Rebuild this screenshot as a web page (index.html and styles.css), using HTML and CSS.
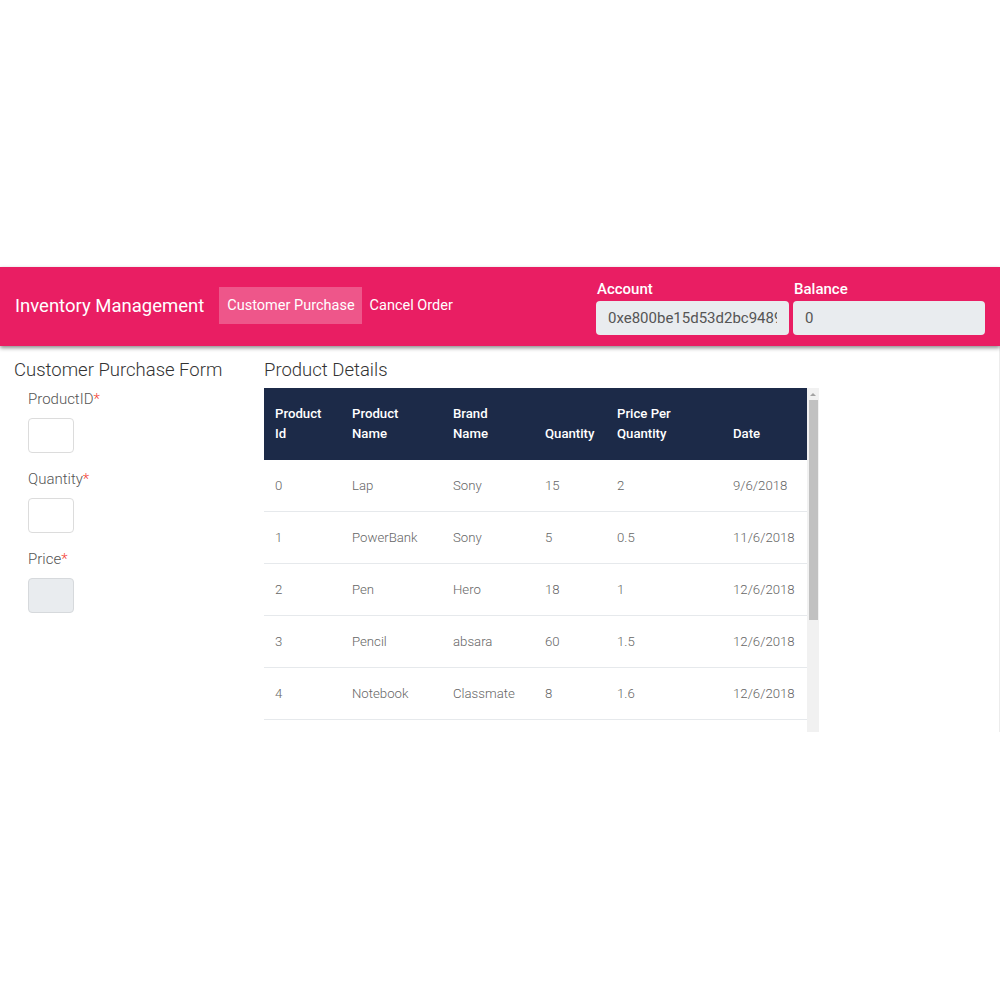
FILE: index.html
```html
<!DOCTYPE html>
<html lang="en">
<head>
<meta charset="utf-8">
<title>Inventory Management</title>
<link rel="stylesheet" href="styles.css">
</head>
<body>
<div class="page">
  <header class="nav">
    <div class="brand">Inventory Management</div>
    <nav class="links">
      <a class="link active">Customer Purchase</a>
      <a class="link">Cancel Order</a>
    </nav>
    <div class="fields">
      <div class="field account">
        <label class="field-label">Account</label>
        <input class="field-input" type="text" value="0xe800be15d53d2bc9489c1a2b3" readonly>
      </div>
      <div class="field balance">
        <label class="field-label">Balance</label>
        <input class="field-input" type="text" value="0" readonly>
      </div>
    </div>
  </header>
  <main class="content">
    <section class="form-col">
      <h2 class="title">Customer Purchase Form</h2>
      <div class="form-body">
        <div class="group">
          <label class="label">ProductID<span class="req">*</span></label>
          <input class="box" type="text">
        </div>
        <div class="group">
          <label class="label">Quantity<span class="req">*</span></label>
          <input class="box" type="text">
        </div>
        <div class="group">
          <label class="label">Price<span class="req">*</span></label>
          <input class="box disabled" type="text" disabled>
        </div>
      </div>
    </section>
    <section class="details-col">
      <h2 class="title">Product Details</h2>
      <div class="scroller">
        <div class="table-wrap">
          <table class="table">
            <colgroup>
              <col class="c1"><col class="c2"><col class="c3"><col class="c4"><col class="c5"><col class="c6">
            </colgroup>
            <thead>
              <tr><th>Product<br>Id</th><th>Product<br>Name</th><th>Brand<br>Name</th><th>Quantity</th><th>Price Per<br>Quantity</th><th>Date</th></tr>
            </thead>
            <tbody>
              <tr><td>0</td><td>Lap</td><td>Sony</td><td>15</td><td>2</td><td>9/6/2018</td></tr>
              <tr><td>1</td><td>PowerBank</td><td>Sony</td><td>5</td><td>0.5</td><td>11/6/2018</td></tr>
              <tr><td>2</td><td>Pen</td><td>Hero</td><td>18</td><td>1</td><td>12/6/2018</td></tr>
              <tr><td>3</td><td>Pencil</td><td>absara</td><td>60</td><td>1.5</td><td>12/6/2018</td></tr>
              <tr><td>4</td><td>Notebook</td><td>Classmate</td><td>8</td><td>1.6</td><td>12/6/2018</td></tr>
            </tbody>
          </table>
        </div>
        <div class="scrollbar">
          <div class="arrow"></div>
          <div class="thumb"></div>
        </div>
      </div>
    </section>
  </main>
</div>
</body>
</html>
```
FILE: styles.css
```css
* { box-sizing: border-box; }
html, body { margin: 0; padding: 0; background: #fff; }
body { font-family: Roboto, "Liberation Sans", Arial, sans-serif; }
.page { padding-top: 267px; width: 1000px; }

.nav {
  display: flex;
  align-items: center;
  height: 79px;
  background: #e91e63;
  padding: 0 15px;
  box-shadow: 0 2px 4px rgba(0,0,0,0.45);
  position: relative;
  z-index: 2;
}
.brand {
  color: #fff;
  font-size: 18.5px;
  font-weight: 400;
  margin-right: 15px;
  margin-top: -2px;
}
.links { display: flex; margin-top: -2px; }
.link {
  color: #fff;
  font-size: 14.5px;
  font-weight: 400;
  line-height: 37px;
  padding: 0 8px;
}
.link.active { background: rgba(255,255,255,0.25); padding: 0 7px 0 8px; }
.fields { display: flex; margin-left: auto; gap: 4px; padding-top: 2px; }
.field { display: flex; flex-direction: column; }
.field-label { color: #fff; font-size: 15px; font-weight: 500; line-height: 18px; padding-left: 1px; margin-bottom: 3px; }
.field-input {
  height: 34px;
  border: none;
  border-radius: 4px;
  background: #e9ecef;
  color: #555;
  font-family: Roboto, "Liberation Sans", Arial, sans-serif;
  font-size: 15px;
  font-weight: 400;
  padding: 0 12px;
  outline: none;
}
.account .field-input { width: 193px; }
.balance .field-input { width: 192px; }

.content {
  display: flex;
  height: 386px;
  border-right: 1px solid #ececec;
}
.form-col { width: 264px; padding-left: 14px; }
.details-col { width: 560px; }
.title {
  margin: 12px 0 6px;
  font-size: 18.5px;
  line-height: 24px;
  font-weight: 300;
  color: #333;
}
.form-body { padding-left: 14px; padding-top: 2px; }
.group { margin-bottom: 17px; }
.label {
  display: block;
  color: #555;
  font-size: 15px;
  font-weight: 300;
  line-height: 18px;
  margin-bottom: 10px;
}
.req { color: #f44336; }
.box {
  display: block;
  width: 46px;
  height: 35px;
  border: 1px solid #dcdcdc;
  border-radius: 4px;
  background: #fff;
}
.box.disabled { background: #e9ecef; border-color: #d6d9dc; }

.scroller { display: flex; height: 344px; }
.table-wrap { width: 543px; overflow: hidden; }
.table { width: 543px; table-layout: fixed; border-collapse: collapse; font-size: 13.2px; }
.c1 { width: 77px; } .c2 { width: 101px; } .c3 { width: 92px; }
.c4 { width: 72px; } .c5 { width: 116px; } .c6 { width: 85px; }
.table th {
  background: #1c2a48;
  color: #fff;
  font-weight: 500;
  text-align: left;
  vertical-align: bottom;
  line-height: 20px;
  padding: 16px 11px 16px;
}
.table td {
  color: #666;
  font-weight: 300;
  line-height: 20px;
  padding: 16px 11px 15px;
  border-bottom: 1px solid #e6e9ec;
  white-space: nowrap;
}
.scrollbar { width: 12px; background: #f1f1f1; display: flex; flex-direction: column; align-items: center; }
.arrow {
  width: 0; height: 0;
  margin: 5px 0 4px;
  border-left: 3px solid transparent;
  border-right: 3px solid transparent;
  border-bottom: 3px solid #a3a3a3;
}
.thumb { width: 9px; height: 220px; background: #c1c1c1; }
```
